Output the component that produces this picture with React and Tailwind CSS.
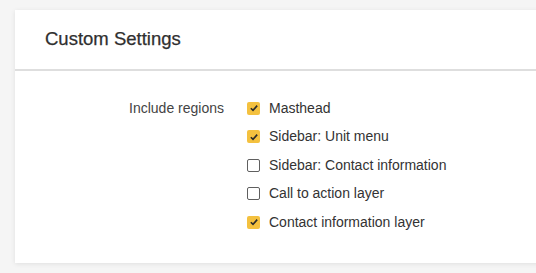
const regions = [
  { label: "Masthead", checked: true },
  { label: "Sidebar: Unit menu", checked: true },
  { label: "Sidebar: Contact information", checked: false },
  { label: "Call to action layer", checked: false },
  { label: "Contact information layer", checked: true },
];

function Box({ checked }) {
  if (checked) {
    return (
      <span className="flex h-[13px] w-[13px] shrink-0 items-center justify-center rounded-[2px] bg-[#f4c13f]">
        <svg viewBox="0 0 12 12" className="h-[10px] w-[10px]">
          <path d="M2.2 6.3 L4.8 8.8 L9.8 3.2" fill="none" stroke="#2b2b2b" strokeWidth="2" />
        </svg>
      </span>
    );
  }
  return <span className="h-[13px] w-[13px] shrink-0 rounded-[2px] border border-[#5f5f5f] bg-white" />;
}

export default function App() {
  return (
    <div className="min-h-[273px] bg-[#f5f5f5] pb-[12px] pl-[15px] pt-[10px] font-['Liberation_Sans',Arial,sans-serif]">
      <div className="mr-[-10px] bg-white shadow-[0_1px_5px_rgba(0,0,0,0.09)]">
        {/* Header */}
        <div className="flex h-[61px] items-center border-b-2 border-[#dedede] px-[30px] pb-[1px]">
          <h2 className="text-[18.5px] text-[#2f2f2f] [-webkit-text-stroke:0.25px_#2f2f2f]">Custom Settings</h2>
        </div>

        {/* Body */}
        <div className="flex pb-[26px] pt-[23px]">
          <div className="w-[209px] shrink-0 text-right text-[14px] leading-[28.5px] text-[#444]">
            Include regions
          </div>
          <div className="ml-[23px] flex flex-col">
            {regions.map((r) => (
              <label key={r.label} className="flex h-[28.5px] items-center gap-[9px] text-[14px] text-[#333]">
                <Box checked={r.checked} />
                <span>{r.label}</span>
              </label>
            ))}
          </div>
        </div>
      </div>
    </div>
  );
}
